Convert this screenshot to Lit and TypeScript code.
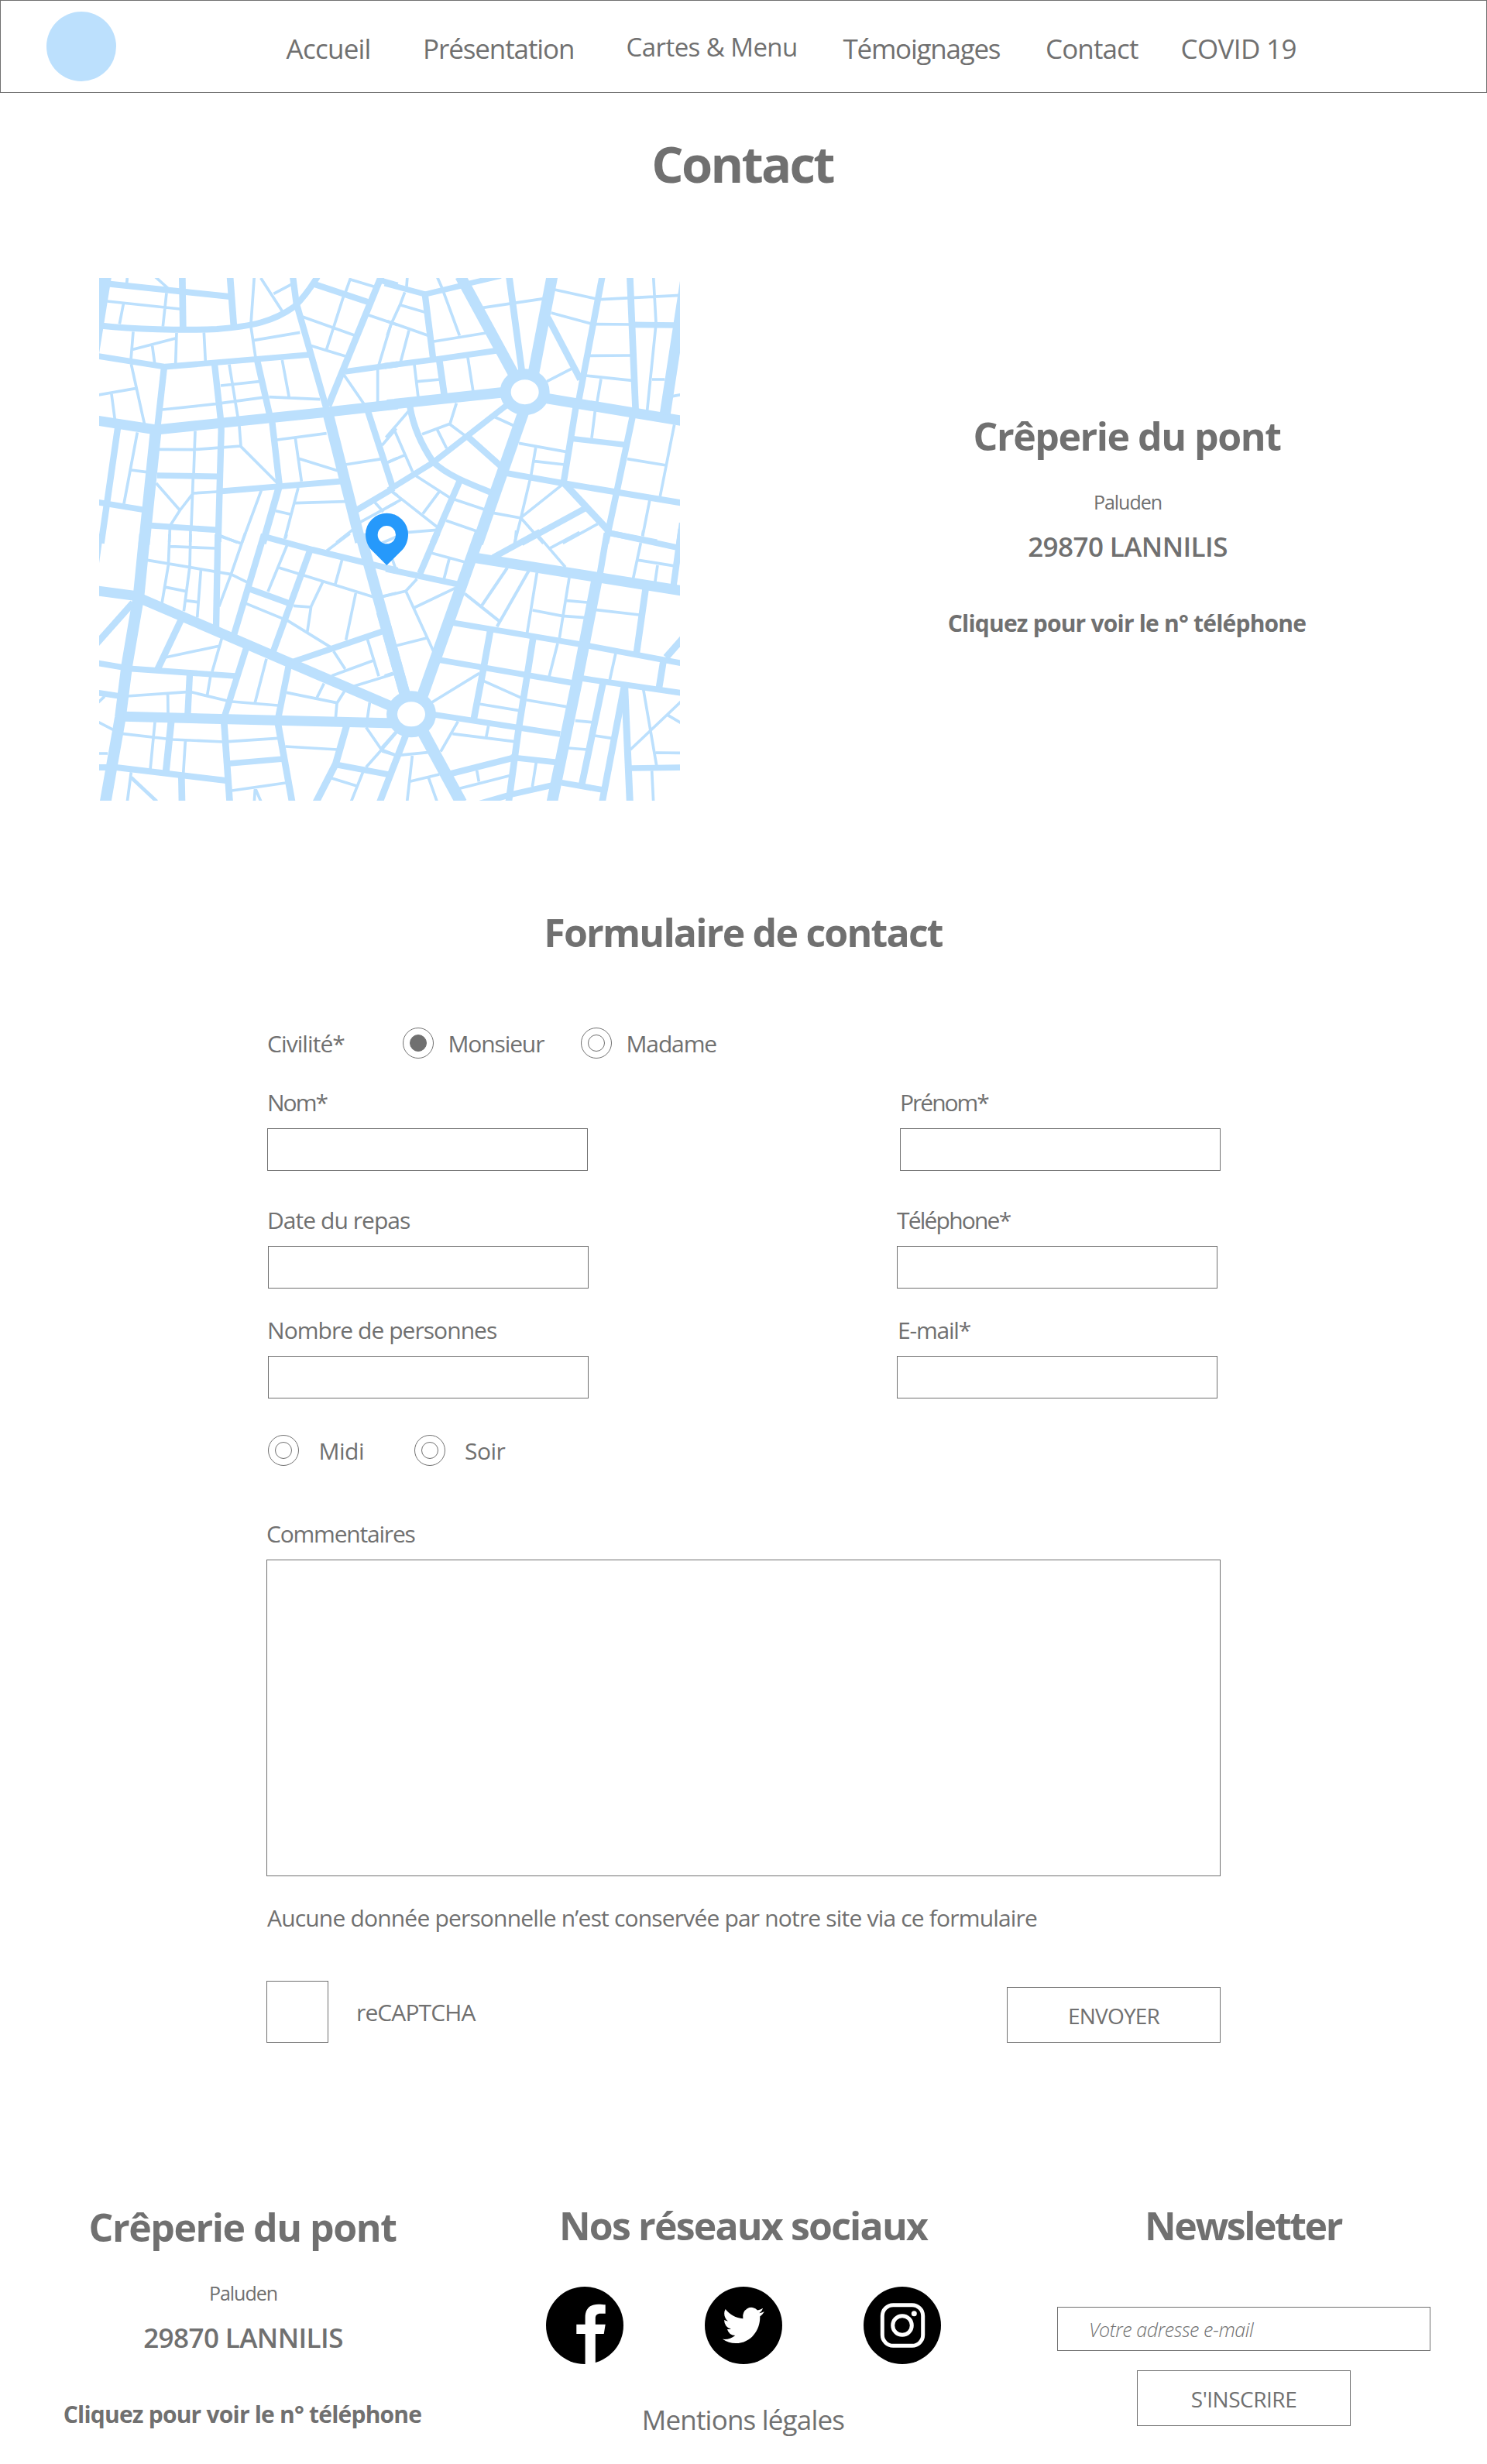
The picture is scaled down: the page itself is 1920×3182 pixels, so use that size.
import { LitElement, html, svg, css } from "lit";
import { classMap } from "lit/directives/class-map.js";

type Road = [width: number, path: string];

/* The street plan is described in four quadrants, each with its own origin. */
const quadrants: { x: number; y: number; roads: Road[] }[] = [
  {
    x: 0, y: 0,
    roads: [
      [50, "M47,20L-1,318"],
      [39, "M14,579L245,615L890,548L1180,516"],
      [44, "M245,605L198,1060"],
      [25, "M774,20L788,125L905,535"],
      [42, "M905,530L1036,1050"],
      [24, "M45,48L537,100"],
      [24, "M35,212C150,225 350,231 480,225C620,214 700,195 780,138C810,110 840,70 870,22"],
      [26, "M346,20L349,225"],
      [26, "M531,20L546,218"],
      [23, "M14,329L280,371L840,324"],
      [25, "M276,371L250,605"],
      [25, "M471,360L496,585L497,620L485,1050"],
      [25, "M635,340L685,560"],
      [25, "M693,575L723,835"],
      [27, "M722,832L658,1055"],
      [23, "M497,853L968,814"],
      [26, "M1117,20L912,522"],
      [24, "M855,50L1065,120"],
      [22, "M1110,35L1180,55"],
      [23, "M975,390L1180,361"],
      [25, "M1064,540L1160,835"],
      [24, "M1015,930L1165,841"],
      [25, "M97,602L32,1055"],
      [23, "M14,895L195,925"],
      [23, "M248,792L485,796"],
      [23, "M222,986L480,1003"],
      [11, "M133,27L131,47M241,22L290,66M55,117L337,147M118,128L103,205M285,85L271,215M625,20L612,205"],
      [11, "M650,27L733,155M700,88L768,52M612,215L630,335M625,268L802,238M156,235L147,345M155,304L322,260M230,290L239,356M324,240L320,360M430,238L436,352"],
      [11, "M148,360L200,595M20,480L165,455M72,477L85,575M268,537L475,515L657,490M528,362L562,570M495,444L645,428M733,345L760,490M682,488L880,497"],
      [11, "M172,625L120,902M148,771L208,779M396,620L390,790M388,800L381,990M258,691L390,692L480,685L573,678M567,600L573,680L715,822M245,822L337,927M387,862L337,927L300,985M388,861L482,855"],
      [11, "M298,1000L296,1050M378,1005L377,1050M652,850L576,1055M495,1026L560,1052M795,840L743,1038M708,929L767,943M783,899L979,893M713,654L905,629M784,648L808,815M798,727L947,773"],
      [11, "M978,750L1118,728M805,175L1015,250M970,100L905,303M838,287L978,330M998,27L972,100M998,33L1095,62M1066,170L1180,209M1155,205L1107,365M972,402L1050,515M1103,380L1103,515"],
      [11, "M1175,610L1120,675M1143,741L1180,724M1035,973L1175,897M1092,896L1125,933M1155,852L1180,870M943,1052L1008,1001"],
    ],
  },
  {
    x: 1140, y: 0,
    roads: [
      [40, "M0,518L440,471L500,466"],
      [40, "M560,484L620,494L1144,581"],
      [43, "M283,20L490,400L510,437"],
      [44, "M639,20L560,430"],
      [26, "M472,20L523,400L526,430"],
      [44, "M537,520L350,1055"],
      [25, "M833,20L742,500"],
      [26, "M940,20L962,540"],
      [42, "M1158,20L1076,556"],
      [23, "M950,208L1120,210"],
      [25, "M622,180L748,420"],
      [22, "M-10,48L147,90L290,56"],
      [21, "M310,50L440,19"],
      [25, "M146,90L177,335"],
      [23, "M-10,368L190,342L427,308"],
      [26, "M201,340L221,480"],
      [25, "M88,525C100,600 130,670 178,740"],
      [23, "M5,849L178,742L480,506"],
      [24, "M178,740C240,795 310,820 402,858"],
      [25, "M310,640L440,756"],
      [25, "M280,815L176,1055"],
      [24, "M455,782L680,822L1144,899"],
      [25, "M731,525L683,820"],
      [22, "M720,650L922,673"],
      [25, "M950,565L890,850L846,1055"],
      [27, "M688,825L855,1004"],
      [24, "M765,920L520,1054"],
      [23, "M855,1014L1044,1051"],
      [11, "M78,20L75,60M68,82L50,130L14,208L0,250M52,132L147,160M0,194L158,250M84,230L52,352M193,22L212,65L280,250M180,273L382,240M370,142L607,107M105,362L120,490M118,428L205,420M312,335L333,468"],
      [11, "M648,72L810,108M635,162L787,203M828,110L1136,94M806,206L950,207M1031,20L1041,200L1040,215L1007,540M786,328L948,327M768,405L948,424M828,418L813,507M1026,420L1075,420M1106,485L1138,479M618,428L717,377"],
      [11, "M268,512L243,592L135,632M243,594L300,637M193,613L230,687M413,564L492,600M85,540L-5,645M28,617L98,778M0,742L68,713"],
      [11, "M110,793L245,880L375,923M200,857L138,940M15,852L60,887L195,993M-5,918L55,885M192,1003L75,1013L20,1036L-40,1062M228,967L347,1008"],
      [11, "M510,667L692,700M575,685L557,792M570,737L687,750M553,808L518,955M680,826L518,955M410,937L518,957L605,1055M518,957L493,1055M680,1054L815,980"],
      [11, "M805,542L792,647M930,728L1082,753M1112,595L1057,873M1017,886L989,1028M1136,975L1125,1055"],
    ],
  },
  {
    x: 0, y: 1020,
    roads: [
      [39, "M10,218L185,241"],
      [39, "M178,246L765,499L1160,668L1200,686"],
      [44, "M201,0L177,240L132,505L106,710L48,1040"],
      [39, "M118,706L1140,731L1195,732"],
      [42, "M1036,0L1206,612"],
      [23, "M28,0L12,115"],
      [26, "M10,428L155,265"],
      [23, "M14,498L150,521L552,549"],
      [26, "M342,330L251,522"],
      [23, "M14,613L100,626"],
      [25, "M484,0L477,365"],
      [25, "M375,540L367,700"],
      [25, "M594,440L510,705"],
      [25, "M663,0L546,390"],
      [24, "M660,8L850,60L1100,121L1180,140"],
      [24, "M608,212L757,266"],
      [25, "M841,62L698,455"],
      [23, "M772,495L1125,375"],
      [25, "M758,510L718,710"],
      [26, "M508,730L530,1040"],
      [26, "M717,735L772,1040"],
      [23, "M528,888L738,870"],
      [27, "M303,725L283,918"],
      [24, "M14,903L90,903L515,954"],
      [26, "M343,940L345,1040"],
      [27, "M983,740L940,890L863,1040"],
      [24, "M945,893L1148,931"],
      [11, "M297,0L292,120L267,268M378,0L375,125L352,298M300,47L472,54M211,100L535,155L600,187M283,205L357,220M418,140L404,323M362,257L406,263M495,8L574,35M590,-5L535,155L488,280"],
      [11, "M500,400L462,532M280,477L492,432M455,552L443,622M131,627L375,610L520,645M290,622L291,692M672,482L628,652M538,648L717,663"],
      [11, "M750,0L746,15M752,42L678,222M722,130L1085,242M965,98L939,192M890,185L845,280L830,380M777,277L843,282M593,268L755,335L920,437M1018,228L980,410M906,64L995,-3"],
      [11, "M932,453L977,522M925,548L1088,488M1062,402L1107,550M1005,590L1175,538M1120,241L1175,228M750,613L945,653M895,578L868,632M974,608L945,655L940,712M1072,652L1063,714"],
      [11, "M20,652L45,628M20,727L78,757M20,849L57,849M111,772L310,795L505,804L525,803L717,790M240,728L222,912M358,800L350,928M148,922L133,1036"],
      [14, "M148,942L247,1035"],
      [11, "M538,993L747,963M628,988L625,1036M629,985L652,1038M745,822L948,834M1058,748L1118,835M1195,745L1118,835L1058,902M1115,833L1180,858M923,944L1022,975M1047,918L1000,1036"],
    ],
  },
  {
    x: 1140, y: 1020,
    roads: [
      [44, "M360,-5L140,615L118,670"],
      [42, "M-22,300L68,618L80,660"],
      [40, "M345,92L1144,219"],
      [43, "M811,180L735,570L638,1040"],
      [46, "M115,722L136,762L287,1040"],
      [26, "M85,745L73,775L-30,1040"],
      [25, "M194,-5L127,152"],
      [24, "M-5,134L275,194"],
      [24, "M592,-10L410,90"],
      [25, "M851,-5L822,165"],
      [23, "M862,-5L1122,51"],
      [25, "M1139,-20L1109,198"],
      [23, "M255,343L765,429L1144,500"],
      [23, "M198,486L715,575"],
      [23, "M748,557L1144,615"],
      [26, "M400,370L373,520L335,718"],
      [26, "M566,395L540,560L508,760L470,1040"],
      [23, "M165,696L670,774"],
      [25, "M245,928L488,866"],
      [23, "M478,864L655,883"],
      [23, "M360,1042L480,1008L640,972"],
      [23, "M675,962L835,990"],
      [26, "M836,575L754,968"],
      [26, "M918,588L832,1040"],
      [27, "M920,592L940,1040"],
      [23, "M945,906L1144,903"],
      [26, "M1001,210L965,465"],
      [27, "M1146,402L1080,477"],
      [26, "M1069,495L1053,594"],
      [11, "M0,40L32,132M115,173L72,220L-20,242M72,220L180,455M103,285L264,208M33,432L152,402M-10,548L22,538M170,72L302,108M240,95L220,172"],
      [12, "M465,130L367,275M300,230L432,335M548,142L425,358"],
      [11, "M580,148L542,382M705,168L667,402M563,294L677,316L767,323M696,257L775,264M500,-15L495,37M585,5L690,127M628,55L745,-8"],
      [11, "M992,-15L989,5M982,33L953,170M973,100L1109,122M1047,120L1037,188M810,293L977,312M660,423L627,552M885,460L862,564"],
      [11, "M168,654L357,538M373,568L522,635M355,657L512,683M540,642L694,668M728,722L792,728M803,780L870,790M701,828L774,834"],
      [11, "M274,725L207,842M253,773L493,803M392,742L383,787M347,915L355,958M280,985L473,935M577,883L562,978M34,765L-22,828M-20,840L35,857L158,845"],
      [11, "M97,858L77,1036M90,957L202,930M160,943L193,1036M992,600L1043,895M1140,646L942,834M1086,700L1140,732M1040,846L1140,847M1025,916L1031,1036"],
    ],
  },
];

class CityMap extends LitElement {
  static styles = css`
    :host { display: block; width: 750px; height: 675px; }
    .map { display: block; width: 100%; height: 100%; }
    .road { fill: none; stroke: #bce0fd; stroke-linejoin: round; }
    .ring { fill: #fff; stroke: #bce0fd; stroke-width: 42; }
    .pin { fill: #2699fb; fill-rule: evenodd; }
  `;
  render() {
    return html`<svg class="map" viewBox="24 27 2250 2025" preserveAspectRatio="none">
      ${quadrants.map((q) => svg`<g transform="translate(${q.x} ${q.y})">
        ${q.roads.map(([w, d]) => svg`<path class="road" stroke-width=${w} d=${d}></path>`)}
      </g>`)}
      <ellipse class="ring" cx="1673" cy="468.500" rx="75" ry="69"></ellipse>
      <ellipse class="ring" cx="1233" cy="1717" rx="75" ry="69"></ellipse>
      <path class="pin" d="M1138,1140L1079,1081C1064,1065 1056,1042 1056,1020A82.500,82 0 0 1 1221,1020C1221,1042 1213,1065 1198,1081ZM1138,987A35,35 0 1 0 1138,1057A35,35 0 1 0 1138,987Z"></path>
    </svg>`;
  }
}
customElements.define("city-map", CityMap);

class AddressCard extends LitElement {
  static styles = css`
    :host { display: flex; flex-direction: column; width: 480px; text-align: center; white-space: nowrap; }
    .name { margin: 0; padding-right: 2px; font-size: 50px; line-height: 62px; font-weight: 700; letter-spacing: -1.48px; }
    .street { margin-top: 34px; font-size: 25px; line-height: 40px; letter-spacing: -1px; }
    .town { margin-top: 12px; font-size: 35px; line-height: 52px; font-weight: 600; letter-spacing: -0.58px; }
    .phone { margin-top: 52px; padding-right: 2px; font-size: 30px; line-height: 42px; font-weight: 700; letter-spacing: -0.79px; }
  `;
  render() {
    return html`
      <h2 class="name">Crêperie du pont</h2>
      <div class="street">Paluden</div>
      <div class="town">29870 LANNILIS</div>
      <div class="phone">Cliquez pour voir le n° téléphone</div>`;
  }
}
customElements.define("address-card", AddressCard);

class AppRoot extends LitElement {
  static styles = css`
    :host {
      display: block; width: 1920px; height: 3182px; box-sizing: border-box;
      background: #fff; color: #707070; overflow: hidden;
      font-family: "Segoe UI", "Open Sans", "Noto Sans", sans-serif;
    }
    * { box-sizing: border-box; }
    .header { display: flex; align-items: center; height: 120px; border: 1px solid #707070; padding-left: 59px; }
    .logo { width: 90px; height: 90px; border-radius: 50%; background: #bce0fd; }
    .nav {
      display: grid; grid-template-columns: 176.5px 262.5px 280px 261.5px 174.5px 160px;
      align-items: baseline; margin: 5px 0 0 219.5px; white-space: nowrap;
      font-size: 35px; line-height: 50px;
    }
    .accueil { letter-spacing: -0.75px; }
    .presentation { letter-spacing: -1.1px; }
    .cartes { font-size: 33px; letter-spacing: -0.56px; align-self: start; margin-top: -2px; }
    .temoignages { letter-spacing: -1.25px; }
    .contact { letter-spacing: -0.88px; }
    .covid { letter-spacing: -0.63px; }

    .title { margin: 51px 0 0; padding-right: 3px; text-align: center; font-size: 65px; line-height: 80px; letter-spacing: -2.7px; }
    .place { display: flex; align-items: flex-start; gap: 338px; margin-top: 108px; padding-left: 128px; }
    .place-card { margin-top: 173px; }

    .form-title { margin: 140px 0 0; padding-right: 1px; text-align: center; font-size: 50px; line-height: 60px; letter-spacing: -1.79px; }
    .form {
      display: flex; flex-direction: column; width: 1232px; margin: 93px 0 0 344px;
      font-size: 30px; line-height: 42px; white-space: nowrap; letter-spacing: -0.92px;
    }
    .civility { display: grid; grid-template-columns: 176px 58.500px 171.500px 58.500px auto; }
    .civility-label { padding-left: 1px; }
    .service { display: grid; grid-template-columns: 65.500px 123.500px 65px auto; margin: 47px 0 0 2px; }
    .radio { display: flex; align-items: center; justify-content: center; width: 40px; height: 40px; border: 1px solid #707070; border-radius: 50%; }
    .dot { width: 22px; height: 22px; border: 1px solid #707070; border-radius: 50%; }
    .dot.on { background: #707070; }
    .fields { display: grid; justify-content: space-between; grid-template-columns: 414px 414px; }
    .fields.first { padding-left: 1px; margin-top: 34px; }
    .fields.second { padding: 0 4px 0 2px; margin-top: 43px; }
    .fields.third { padding: 0 4px 0 2px; margin-top: 33px; }
    .field { display: flex; flex-direction: column; gap: 12px; }
    .box { display: block; width: 414px; height: 55px; margin: 0; padding: 0 12px; border: 1px solid #707070; border-radius: 0; background: #fff; outline: 0; }
    .l-tight { letter-spacing: -2px; }
    .l-phone { letter-spacing: -1.8px; }
    .l-mail { letter-spacing: -1.2px; padding-left: 1px; }
    .l-mid { letter-spacing: -1.13px; }
    .l-loose { letter-spacing: -0.5px; }
    .l-out { margin-left: -1px; letter-spacing: -0.95px; }
    .comments-label { margin-top: 65px; letter-spacing: -1.2px; }
    .comments { display: block; width: 1232px; height: 409px; margin: 12px 0 0; padding: 12px; border: 1px solid #707070; border-radius: 0; resize: none; background: #fff; }
    .notice { margin-top: 33px; padding-left: 1px; letter-spacing: -0.82px; }
    .actions { display: flex; align-items: flex-end; height: 80px; margin-top: 60px; }
    .check { width: 80px; height: 80px; border: 1px solid #707070; }
    .captcha { flex: 1; margin-bottom: 18px; padding-left: 36px; letter-spacing: -0.88px; }
    .button {
      display: block; width: 276px; height: 72px; padding: 2px 0 0; border: 1px solid #707070; border-radius: 0; background: #fff;
      color: #707070; font-family: inherit; font-size: 28px; line-height: 40px;
    }
    .send { letter-spacing: -0.8px; }
    .subscribe { margin: 25px 0 0; letter-spacing: -0.49px; }

    .footer { display: grid; grid-template-columns: 480px 512px 482px; column-gap: 149.500px; margin: 205px 0 0 74px; white-space: nowrap; }
    .footer-card { margin-top: 2px; }
    .footer-title { margin: 0; font-size: 50px; line-height: 62px; text-align: center; letter-spacing: -1.83px; }
    .news-title { padding-right: 2px; letter-spacing: -2.45px; }
    .socials { display: flex; gap: 105px; justify-content: center; margin-top: 48px; }
    .icon { display: block; width: 100px; height: 100px; }
    .legal { margin-top: 47px; text-align: center; font-size: 35px; line-height: 50px; letter-spacing: -0.8px; }
    .news { display: flex; flex-direction: column; align-items: center; }
    .mail {
      display: block; width: 482px; height: 57px; margin: 74px 0 0; padding: 1px 40px 0; border: 1px solid #707070; border-radius: 0; background: #fff;
      font-family: inherit; font-size: 25px; font-style: italic; font-weight: 300; letter-spacing: -0.43px; color: #707070;
    }
    .mail::placeholder { color: #707070; opacity: 1; }
  `;

  private radio(on: boolean) {
    return html`<div class="radio"><div class=${classMap({ dot: true, on })}></div></div>`;
  }

  private field(label: string, tone = "") {
    return html`<label class="field"><span class=${tone}>${label}</span><input class="box" /></label>`;
  }

  render() {
    return html`
      <header class="header">
        <div class="logo"></div>
        <nav class="nav">
          <span class="accueil">Accueil</span>
          <span class="presentation">Présentation</span>
          <span class="cartes">Cartes &amp; Menu</span>
          <span class="temoignages">Témoignages</span>
          <span class="contact">Contact</span>
          <span class="covid">COVID 19</span>
        </nav>
      </header>

      <h1 class="title">Contact</h1>
      <section class="place">
        <city-map></city-map>
        <address-card class="place-card"></address-card>
      </section>

      <h2 class="form-title">Formulaire de contact</h2>
      <section class="form">
        <div class="civility">
          <span class="civility-label">Civilité*</span>
          ${this.radio(true)}<span class="l-mid">Monsieur</span>
          ${this.radio(false)}<span class="l-mid">Madame</span>
        </div>
        <div class="fields first">${this.field("Nom*", "l-tight")}${this.field("Prénom*", "l-tight")}</div>
        <div class="fields second">${this.field("Date du repas", "l-out")}${this.field("Téléphone*", "l-phone")}</div>
        <div class="fields third">${this.field("Nombre de personnes", "l-out")}${this.field("E-mail*", "l-mail")}</div>
        <div class="service">
          ${this.radio(false)}<span class="l-loose">Midi</span>
          ${this.radio(false)}<span class="l-loose">Soir</span>
        </div>
        <div class="comments-label">Commentaires</div>
        <textarea class="comments"></textarea>
        <div class="notice">Aucune donnée personnelle n’est conservée par notre site via ce formulaire</div>
        <div class="actions">
          <div class="check"></div>
          <span class="captcha">reCAPTCHA</span>
          <button class="button send">ENVOYER</button>
        </div>
      </section>

      <footer class="footer">
        <address-card class="footer-card"></address-card>
        <div>
          <h2 class="footer-title">Nos réseaux sociaux</h2>
          <div class="socials">
            <svg class="icon" viewBox="0 0 100 100">
              <circle cx="50" cy="50" r="50"></circle>
              <path fill="#fff" d="M50.600 101V61H39.300V48.700H50.600V40C50.600 28.500 57 22.700 67.500 22.700C71 22.700 74 23 76.700 23.300V34.800H70.500C65.500 34.800 63.800 37.300 63.800 41V48.700H76.700L74.700 61H63.800V101Z"></path>
            </svg>
            <svg class="icon" viewBox="0 0 100 100">
              <circle cx="50" cy="50" r="50"></circle>
              <path fill="#fff" transform="translate(23 21.500) scale(2.240 2.370)" d="M23.953 4.570a10 10 0 01-2.825.775 4.958 4.958 0 002.163-2.723c-.951.555-2.005.959-3.127 1.184a4.920 4.920 0 00-8.384 4.482C7.690 8.095 4.067 6.130 1.640 3.162a4.822 4.822 0 00-.666 2.475c0 1.710.870 3.213 2.188 4.096a4.904 4.904 0 01-2.228-.616v.060a4.923 4.923 0 003.946 4.827 4.996 4.996 0 01-2.212.085 4.936 4.936 0 004.604 3.417 9.867 9.867 0 01-6.102 2.105c-.390 0-.779-.023-1.170-.067a13.995 13.995 0 007.557 2.209c9.053 0 13.998-7.496 13.998-13.985 0-.210 0-.420-.015-.630A9.935 9.935 0 0024 4.590z"></path>
            </svg>
            <svg class="icon" viewBox="0 0 100 100">
              <circle cx="50" cy="50" r="50"></circle>
              <rect x="24.300" y="23.700" width="52.400" height="52.600" rx="14" fill="none" stroke="#fff" stroke-width="5"></rect>
              <circle cx="50" cy="50" r="12.300" fill="none" stroke="#fff" stroke-width="5"></circle>
              <circle cx="65.300" cy="34.700" r="3.500" fill="#fff"></circle>
            </svg>
          </div>
          <div class="legal">Mentions légales</div>
        </div>
        <div class="news">
          <h2 class="footer-title news-title">Newsletter</h2>
          <input class="mail" placeholder="Votre adresse e-mail" />
          <button class="button subscribe">S'INSCRIRE</button>
        </div>
      </footer>`;
  }
}
customElements.define("app-root", AppRoot);
